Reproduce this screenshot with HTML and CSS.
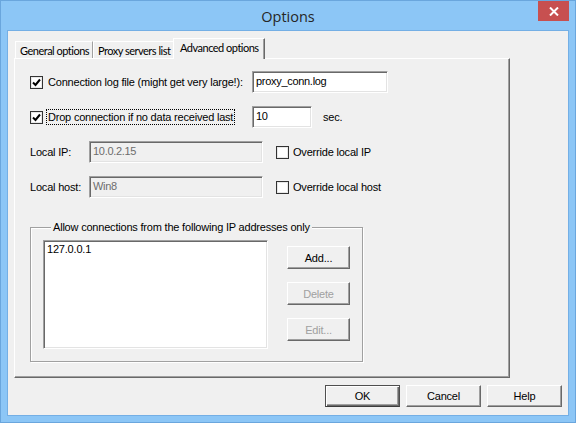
FILE: index.html
```html
<!DOCTYPE html>
<html>
<head>
  <link rel="stylesheet" href="styles.css">
</head>
<body>
  <div class="window">
    <div class="titlebar">
      <span class="title">Options</span>
      <button class="close" aria-label="Close">
        <svg width="10" height="9" viewBox="0 0 10 9"><path d="M1 0.5 L9 8.5 M9 0.5 L1 8.5" stroke="#fff" stroke-width="2"/></svg>
      </button>
    </div>

    <div class="client">
      <div class="tabs">
        <div class="tab">General options</div>
        <div class="tab tab-proxy">Proxy servers list</div>
        <div class="tab active">Advanced options</div>
      </div>

      <div class="panel">
        <div class="row">
          <label class="check wide">
            <span class="box checked"><svg width="9" height="9" viewBox="0 0 9 9"><path d="M1 4.5 L3.5 7 L8 1.5" stroke="#000" stroke-width="2" fill="none"/></svg></span>
            <span class="text">Connection log file (might get very large!):</span>
          </label>
          <div class="input w-file">proxy_conn.log</div>
        </div>

        <div class="row">
          <label class="check wide">
            <span class="box checked"><svg width="9" height="9" viewBox="0 0 9 9"><path d="M1 4.5 L3.5 7 L8 1.5" stroke="#000" stroke-width="2" fill="none"/></svg></span>
            <span class="text focus">Drop connection if no data received last</span>
          </label>
          <div class="input w-sec">10</div>
          <span class="unit">sec.</span>
        </div>

        <div class="row">
          <span class="field-label">Local IP:</span>
          <div class="input w-local disabled">10.0.2.15</div>
          <label class="check side">
            <span class="box"></span>
            <span class="text">Override local IP</span>
          </label>
        </div>

        <div class="row">
          <span class="field-label">Local host:</span>
          <div class="input w-local disabled">Win8</div>
          <label class="check side">
            <span class="box"></span>
            <span class="text">Override local host</span>
          </label>
        </div>

        <fieldset class="group">
          <legend>Allow connections from the following IP addresses only</legend>
          <div class="listbox">
            <div class="item">127.0.0.1</div>
          </div>
          <div class="side-buttons">
            <button class="btn">Add...</button>
            <button class="btn" disabled>Delete</button>
            <button class="btn" disabled>Edit...</button>
          </div>
        </fieldset>
      </div>

      <div class="actions">
        <button class="btn wide-btn default">OK</button>
        <button class="btn wide-btn">Cancel</button>
        <button class="btn wide-btn">Help</button>
      </div>
    </div>
  </div>
</body>
</html>
```

FILE: styles.css
```css
body {
  margin: 0;
  background: #8cc6f6;
  font-family: "Liberation Sans", Arial, sans-serif;
  font-size: 11px;
  letter-spacing: -0.2px;
  color: #000;
  white-space: nowrap;
}

.window {
  width: 576px;
  height: 423px;
  box-sizing: border-box;
  border: 1px solid #6aa6dd;
  background: #8cc6f6;
  display: flex;
  flex-direction: column;
}

.titlebar {
  position: relative;
  height: 30px;
  display: flex;
  align-items: center;
  justify-content: center;
}

.title {
  font-family: "Open Sans", sans-serif;
  font-size: 14.5px;
  letter-spacing: 0;
  color: #262626;
  margin-top: 1px;
}

.close {
  position: absolute;
  top: 0;
  right: 6px;
  width: 31px;
  height: 20px;
  border: none;
  padding: 0;
  background: #c75050;
  display: flex;
  align-items: center;
  justify-content: center;
}

.client {
  margin: 0 7px;
  height: 384px;
  background: #f0f0f0;
  box-shadow: 0 0 0 1px #74afe5;
  display: flex;
  flex-direction: column;
}

/* tab strip */
.tabs {
  display: flex;
  align-items: flex-end;
  height: 20px;
  margin-top: 7px;
  padding-left: 7px;
  position: relative;
  z-index: 1;
}

.tab {
  height: 17px;
  box-sizing: border-box;
  padding: 1px 4px 0;
  border: 1px solid #fff;
  border-bottom: none;
  border-right-color: #a0a0a0;
  font-family: Lato, sans-serif;
  font-size: 11px;
  letter-spacing: -0.5px;
  line-height: 16px;
  width: 78px;
}

.tab-proxy {
  width: 82px;
}

.tab.active {
  height: 21px;
  width: 92px;
  margin-left: -2px;
  margin-bottom: -1px;
  background: #f0f0f0;
  border-right-color: #696969;
  box-shadow: inset -1px 0 #a0a0a0;
  padding-top: 1px;
  padding-left: 6px;
}

.panel {
  width: 496px;
  height: 320px;
  box-sizing: border-box;
  margin-left: 6px;
  border: 1px solid;
  border-color: #fff #696969 #696969 #fff;
  box-shadow: inset -1px -1px #a0a0a0;
  padding: 12px 0 0 15px;
}

.row {
  display: flex;
  align-items: center;
  height: 22px;
  margin-bottom: 13px;
}

.check {
  display: flex;
  align-items: center;
}

.check.wide {
  width: 222px;
}

.check.side {
  margin-left: 13px;
}

.box {
  width: 13px;
  height: 13px;
  box-sizing: border-box;
  border: 1px solid #333;
  background: #fff;
  box-shadow: inset 0 0 0 1px #e8e8e8;
  display: flex;
  align-items: center;
  justify-content: center;
}

.check .text {
  margin-left: 3px;
  padding: 1px 1px;
  border: 1px dotted transparent;
}

.check.side .text {
  margin-left: 2px;
}

.check .text.focus {
  border-color: #000;
}

.input {
  height: 22px;
  box-sizing: border-box;
  border: 1px solid;
  border-color: #a0a0a0 #fff #fff #a0a0a0;
  box-shadow: inset 1px 1px #696969, inset -1px -1px #e3e3e3;
  background: #fff;
  padding: 3px 0 0 3px;
  letter-spacing: -0.3px;
}

.input.disabled {
  background: #f0f0f0;
  color: #6d6d6d;
}

.w-file {
  width: 136px;
}

.w-sec {
  width: 60px;
}

.w-local {
  width: 174px;
}

.unit {
  margin-left: 11px;
}

.field-label {
  width: 59px;
}

/* IP list group */
.group {
  width: 333px;
  height: 141px;
  box-sizing: border-box;
  margin: 23px 0 0 0;
  padding: 7px 12px 0 12px;
  border: 1px solid #a0a0a0;
  box-shadow: inset 1px 1px #fff, 1px 1px #fff;
  display: flex;
  align-items: flex-start;
}

.group legend {
  margin-left: 8px;
  padding: 0 2px;
  background: #f0f0f0;
}

.listbox {
  width: 225px;
  height: 109px;
  box-sizing: border-box;
  border: 1px solid;
  border-color: #a0a0a0 #fff #fff #a0a0a0;
  box-shadow: inset 1px 1px #696969, inset -1px -1px #e3e3e3;
  background: #fff;
  padding: 2px 0 0 3px;
}

.side-buttons {
  display: flex;
  flex-direction: column;
  gap: 13px;
  margin: 6px 0 0 19px;
}

.btn {
  width: 63px;
  height: 23px;
  box-sizing: border-box;
  padding: 0;
  border: 1px solid;
  border-color: #fff #696969 #696969 #fff;
  box-shadow: inset -1px -1px #a0a0a0;
  background: #f0f0f0;
  font-family: inherit;
  font-size: 11px;
  letter-spacing: -0.2px;
  color: #000;
}

.btn:disabled {
  color: #a0a0a0;
}

.actions {
  display: flex;
  justify-content: flex-end;
  gap: 6px;
  margin: 7px 6px 0 0;
}

.wide-btn {
  width: 75px;
  height: 22px;
}

.btn.default {
  border-color: #4f4f4f #4f4f4f #3c3c3c #4f4f4f;
  box-shadow: inset 1px 1px #fff, inset -1px -1px #696969, inset -2px -2px #a0a0a0;
}
```
